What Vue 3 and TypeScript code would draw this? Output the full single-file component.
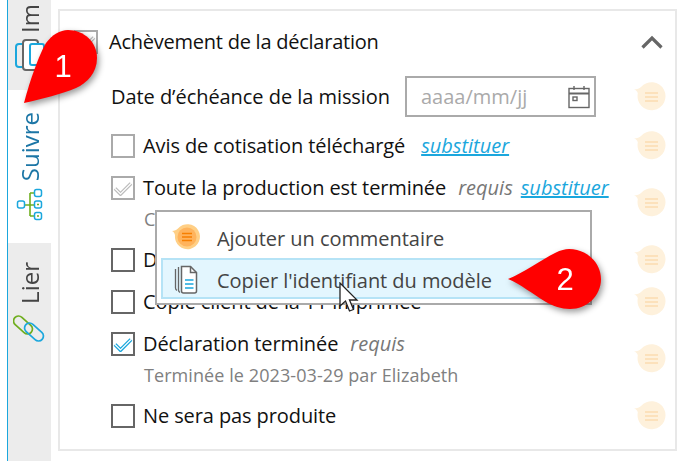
<script setup lang="ts">
interface Row {
  label: string
  box: 'empty' | 'disabled' | 'dark' | 'checked'
  req?: boolean
  sub?: boolean
  note?: string
}
const rows: Row[] = [
  { label: 'Avis de cotisation téléchargé', box: 'disabled', sub: true },
  { label: 'Toute la production est terminée', box: 'disabled', req: true, sub: true, note: 'Complétée' },
  { label: 'Déclaration vérifiée', box: 'dark' },
  { label: 'Copie client de la T1 imprimée', box: 'dark' },
  { label: 'Déclaration terminée', box: 'checked', req: true, note: 'Terminée le 2023-03-29 par Elizabeth' },
  { label: 'Ne sera pas produite', box: 'dark' },
]
</script>

<template>
  <div class="page">
    <nav class="rail">
      <div class="tab tab-first">
        <span class="tab-label">Im</span>
        <svg class="tab-icon" width="38" height="32" viewBox="0 0 38 32" fill="none">
          <rect x="1" y="5" width="18" height="23" rx="3" stroke="#1ba7dd" stroke-width="2" />
          <rect x="8" y="1" width="15" height="30" rx="3" fill="#fff" stroke="#666" stroke-width="2" />
          <rect x="15" y="5" width="14" height="21" rx="2" fill="#fff" stroke="#1ba7dd" stroke-width="2" />
        </svg>
      </div>
      <div class="tab tab-active">
        <span class="tab-label blue">Suivre</span>
        <svg class="tree" width="27" height="33" viewBox="0 0 27 33" fill="none">
          <path d="M9 17H14M14 5V28M14 17H19M14 28H19M14 5H19" stroke="#6fae1e" stroke-width="1.6" />
          <rect x="1.500" y="13" width="7" height="7" rx="2" fill="#fff" stroke="#1ba7dd" stroke-width="1.500" />
          <rect x="18.500" y="1.500" width="7" height="7" rx="2" fill="#fff" stroke="#1ba7dd" stroke-width="1.500" />
          <rect x="18.500" y="13" width="7" height="7" rx="2" fill="#fff" stroke="#1ba7dd" stroke-width="1.500" />
          <rect x="18.500" y="24.500" width="7" height="7" rx="2" fill="#fff" stroke="#1ba7dd" stroke-width="1.500" />
          <path d="M21 16.500H23M21 28H23" stroke="#6fae1e" stroke-width="1.500" />
        </svg>
      </div>
      <div class="tab tab-last">
        <span class="tab-label">Lier</span>
        <svg class="clip" width="34" height="28" viewBox="0 0 34 28" fill="none" stroke-width="1.7">
          <rect x="-1" y="5" width="22" height="10" rx="5" transform="rotate(42 10 10)" stroke="#6fae1e" />
          <rect x="10" y="12" width="22" height="10" rx="5" transform="rotate(42 21 17)" stroke="#1ba7dd" />
        </svg>
      </div>
    </nav>

    <section class="panel">
      <header class="head">
        <span class="box box-disabled head-box">
          <svg width="20" height="16" viewBox="0 0 20 16" fill="none">
            <path d="M2 8.500L7.500 14L18 3.500" stroke="#bbb" stroke-width="3.600" />
            <path d="M2 8.500L7.500 14L18 3.500" stroke="#fff" stroke-width="1.200" />
          </svg>
        </span>
        <h1 class="title">Achèvement de la déclaration</h1>
        <svg class="chevron" width="22" height="14" viewBox="0 0 22 14" fill="none">
          <path d="M1.500 12.500L11 3L20.500 12.500" stroke="#666" stroke-width="3.200" />
        </svg>
      </header>

      <div class="row date-row">
        <div class="row-main date-main">
          <span class="date-label">Date d’échéance de la mission</span>
          <div class="date-input">
            <span>aaaa/mm/jj</span>
            <svg width="22" height="24" viewBox="0 0 22 24" fill="none" stroke="#666" stroke-width="1.400">
              <rect x="1" y="3.500" width="20" height="19" />
              <path d="M1 8.500H21" stroke-width="2" />
              <path d="M6 1V5M16 1V5" />
              <rect x="5" y="12" width="4" height="3.500" />
            </svg>
          </div>
        </div>
        <svg class="comment" width="34" height="30" viewBox="0 0 34 30">
          <path d="M0 7.500C3 7.300 5.500 6.500 7 5A14 14 0 1 1 3.800 11.500C3.500 9.500 2 8 0 7.500Z" fill="#fef1dc" />
          <path d="M11 11H24M11 15H24M11 19H24" stroke="#fcdcb0" stroke-width="1.600" />
        </svg>
      </div>

      <div v-for="row in rows" :key="row.label" class="row">
        <div class="row-main">
          <div class="line">
            <span class="box" :class="'box-' + row.box">
              <svg v-if="row.box === 'disabled' && row.req" width="20" height="16" viewBox="0 0 20 16" fill="none">
                <path d="M2 8.500L7.500 14L18 3.500" stroke="#bbb" stroke-width="3.600" />
                <path d="M2 8.500L7.500 14L18 3.500" stroke="#fff" stroke-width="1.200" />
              </svg>
              <svg v-if="row.box === 'checked'" width="20" height="16" viewBox="0 0 20 16" fill="none">
                <path d="M2 8.500L7.500 14L18 3.500" stroke="#1ba7dd" stroke-width="3.800" />
                <path d="M2 8.500L7.500 14L18 3.500" stroke="#fff" stroke-width="1.200" />
              </svg>
            </span>
            <span class="label">{{ row.label }}</span>
            <em v-if="row.req" class="req">requis</em>
            <a v-if="row.sub" class="sub">substituer</a>
          </div>
          <p v-if="row.note" class="note">{{ row.note }}</p>
        </div>
        <svg class="comment" width="34" height="30" viewBox="0 0 34 30">
          <path d="M0 7.500C3 7.300 5.500 6.500 7 5A14 14 0 1 1 3.800 11.500C3.500 9.500 2 8 0 7.500Z" fill="#fef1dc" />
          <path d="M11 11H24M11 15H24M11 19H24" stroke="#fcdcb0" stroke-width="1.600" />
        </svg>
      </div>
    </section>

    <div class="menu">
      <div class="menu-item">
        <svg width="28" height="26" viewBox="0 0 28 26">
          <path d="M0 7C2.500 7 4.500 6 6 4.500A12.500 12.500 0 1 1 3 11.500C2.800 9.500 2 8 0 7Z" fill="#ffcf85" />
          <circle cx="15" cy="13" r="9.500" fill="#ffb35c" />
          <path d="M10 9.500H20M10 13H20M10 16.500H20" stroke="#f77f00" stroke-width="1.500" />
        </svg>
        <span>Ajouter un commentaire</span>
      </div>
      <div class="menu-item menu-active">
        <svg width="28" height="30" viewBox="0 0 28 30" fill="none">
          <path d="M3.500 5V24C3.500 25 4.200 26 5 26.500" stroke="#666" stroke-width="1.300" />
          <path d="M6.500 3V26C6.500 27 7.200 28 8 28.500" stroke="#666" stroke-width="1.300" />
          <path d="M9.500 2.500H18.500L24.500 8.500V27C24.500 28 23.500 29 22.500 29H11.500C10.500 29 9.500 28 9.500 27Z" fill="#fff" stroke="#666" stroke-width="1.500" />
          <path d="M18.500 2.500V8.500H24.500" stroke="#666" stroke-width="1.500" />
          <path d="M13 16H21.500M13 20H21.500M13 24H21.500" stroke="#1ba7dd" stroke-width="1.500" />
        </svg>
        <span>Copier l'identifiant du modèle</span>
      </div>
    </div>

    <svg class="cursor" width="22" height="32" viewBox="0 0 22 32">
      <path d="M1 1V24L6.500 19L10.500 29L14.500 27.500L10.500 18H18Z" fill="#fff" stroke="#222" stroke-width="1.300" />
    </svg>

    <div class="callout callout-one"><div class="shape"><span>1</span></div></div>
    <div class="callout callout-two"><div class="shape"><span>2</span></div></div>
  </div>
</template>

<style>
html, body { margin: 0; background: #fff; }
</style>

<style scoped>
.page {
  position: relative;
  width: 688px;
  height: 461px;
  overflow: hidden;
  display: flex;
  background: #fff;
  font-family: "Open Sans", "Noto Sans", sans-serif;
  color: #111;
}
.rail {
  width: 43px;
  margin-left: 7px;
  border-left: 1px solid #1ba7dd;
  display: flex;
  flex-direction: column;
  flex: none;
}
.tab {
  display: flex;
  flex-direction: column;
  align-items: center;
  overflow: hidden;
}
.tab-first { height: 90px; background: #ececec; justify-content: flex-end; padding-bottom: 19px; box-sizing: border-box; }
.tab-active { height: 153px; background: #fff; padding-top: 22px; box-sizing: border-box; gap: 7px; }
.tab-last { flex: 1; background: #ececec; padding-top: 19px; gap: 11px; }
.tab-label {
  writing-mode: vertical-rl;
  transform: rotate(180deg);
  font-size: 24px;
  line-height: 28px;
  color: #444;
}
.blue { color: #1c76a6; }
.tab-first .tab-label { margin-bottom: 6px; }
.tab-icon { margin-left: 8px; flex: none; }
.panel {
  margin: 9px 11px 10px 7px;
  width: 619px;
  box-sizing: border-box;
  border: 2px solid #e8e8e8;
  padding: 10px 0 0 0;
  display: flex;
  flex-direction: column;
  flex: none;
}
.head {
  height: 42px;
  display: flex;
  align-items: center;
  padding-left: 14px;
  flex: none;
}
.head-box { margin-right: 11px; border-color: #aaa; }
.title {
  margin: 0 0 2px;
  font-size: 20px;
  font-weight: 400;
  flex: 1;
  letter-spacing: -0.24px;
}
.chevron { margin-right: 12px; }
.row {
  display: flex;
  align-items: center;
  padding-left: 51px;
}
.date-row { margin: 13px 0 8px; height: 41px; }
.row-main { flex: 1; min-width: 0; }
.date-main { display: flex; align-items: center; justify-content: space-between; padding-right: 38px; }
.date-label { font-size: 20px; letter-spacing: -0.05px; }
.date-input {
  width: 191px;
  height: 41px;
  box-sizing: border-box;
  border: 2px solid #aaa;
  display: flex;
  align-items: center;
  justify-content: space-between;
  padding: 0 4px 0 14px;
  font-size: 20px;
  color: #aaa;
}
.comment { margin-right: 7px; flex: none; }
.line {
  height: 42px;
  display: flex;
  align-items: center;
  font-size: 20px;
}
.box {
  width: 24px;
  height: 24px;
  box-sizing: border-box;
  border: 2px solid #666;
  flex: none;
  display: inline-flex;
  align-items: center;
  justify-content: center;
}
.box-disabled { border-color: #aaa; }
.label, .req, .sub { margin-bottom: 2px; }
.label { margin-left: 8px; letter-spacing: -0.1px; white-space: nowrap; }
.req { margin-left: 12px; color: #777; }
.sub {
  margin-left: 16px;
  color: #1ba7dd;
  font-style: italic;
  text-decoration: underline;
}
.req + .sub { margin-left: 8px; }
.note {
  margin: 3px 0 12px 33px;
  height: 15px;
  line-height: 15px;
  font-size: 18px;
  color: #808080;
  letter-spacing: 0.08px;
  white-space: nowrap;
}
.menu {
  position: absolute;
  left: 155px;
  top: 210px;
  width: 437px;
  height: 95px;
  box-sizing: border-box;
  border: 2px solid #aaa;
  background: #fff;
  padding: 4px 5px 0 4px;
}
.menu-item {
  height: 41px;
  display: flex;
  align-items: center;
  gap: 17px;
  padding-left: 11px;
  font-size: 20px;
  letter-spacing: -0.05px;
  color: #444;
  box-sizing: border-box;
}
.menu-item span { position: relative; top: 2px; }
.menu-item svg { flex: none; }
.menu-active {
  background: #e3f6fe;
  border: 2px solid #b5e3f6;
  margin-top: 1px;
  padding-left: 9px;
}
.cursor { position: absolute; left: 339px; top: 282px; }
.callout {
  position: absolute;
  filter: drop-shadow(2px 3px 3px rgba(0, 0, 0, 0.4));
}
.shape {
  width: 100%;
  height: 100%;
  background: #f00;
  color: #fff;
  font-family: "Liberation Sans", sans-serif;
  font-size: 31px;
  display: flex;
  align-items: center;
  justify-content: center;
}
.callout-one {
  left: 24px;
  top: 30px;
  width: 74px;
  height: 74px;
}
.callout-one .shape {
  clip-path: path('M0 73C6 50 15 25 22 13C28 5 36 0 44 0C60 0 73 12 73 28C73 43 63 53 52 58C38 64 18 69 0 73Z');
}
.callout-one span { position: relative; left: 2px; top: 0; }
.callout-two {
  left: 508px;
  top: 249px;
  width: 94px;
  height: 62px;
}
.callout-two .shape {
  clip-path: path('M0 30C15 24 35 10 47 4C53 1 57 0 61 0C78 0 93 13 93 30C93 47 79 60 62 60C53 60 45 57 38 53C25 45 12 35 0 30Z');
}
.callout-two span { position: relative; left: 10px; top: 0; }
</style>
